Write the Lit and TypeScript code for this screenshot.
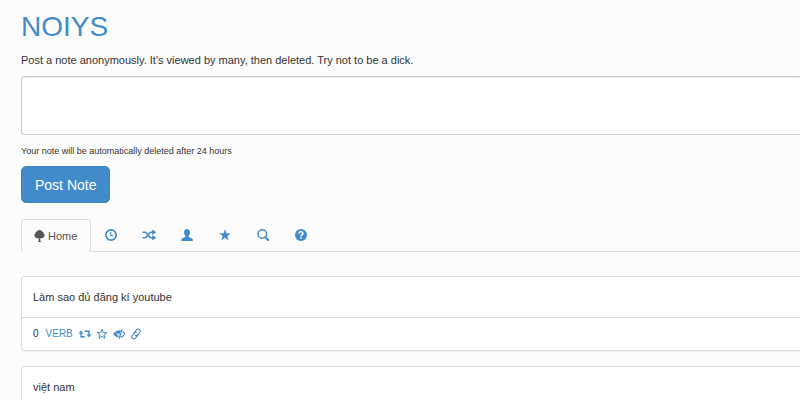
import { LitElement, html, css, svg } from "lit";
import { customElement } from "lit/decorators.js";

const icon = (body: unknown, cls = "icon") =>
  html`<svg class=${cls} viewBox="0 0 24 24" aria-hidden="true">${body}</svg>`;

const tree = svg`<path d="M11 0C8 0 6.500 1.500 6 3C3.500 3.500 2.500 5 3 7C.500 8.500 0 11.500 2 13.500C3.500 16 6.500 17 9.500 16.500V21L7.500 24H14.500L12.500 21V16.500C15.500 17 18.500 16 20 13.500C22 11.500 21.500 8.500 19 7C19.500 5 18.500 3.500 16 3C15.500 1.500 14 0 11 0Z"/>`;
const clock = svg`<circle cx="12" cy="12" r="10.200" fill="none" stroke="currentColor" stroke-width="3.400"/><path d="M11.500 6V13H16.500" fill="none" stroke="currentColor" stroke-width="2.200"/>`;
const random = svg`<path d="M-1 6.500H4C9 6.500 11 17.500 16 17.500H20M-1 17.500H4C9 17.500 11 6.500 16 6.500H20" fill="none" stroke="currentColor" stroke-width="3.200"/><path d="M18.500 1L26.500 6.500L18.500 12ZM18.500 12L26.500 17.500L18.500 23Z"/>`;
const user = svg`<path d="M12 0C8.500 0 6 2.500 6 6.500C6 9.500 7 12 8.500 13.500V16C5.500 17.500 1 18.500 .500 21V24H23.500V21C23 18.500 18.500 17.500 15.500 16V13.500C17 12 18 9.500 18 6.500C18 2.500 15.500 0 12 0Z"/>`;
const starPath = "M12 .5L14.900 8.700L23.600 8.900L16.700 14.100L19.200 22.500L12 17.500L4.800 22.500L7.300 14.100L.400 8.900L9.100 8.700Z";
const star = svg`<path d=${starPath}/>`;
const search = svg`<circle cx="10.500" cy="10" r="8.500" fill="none" stroke="currentColor" stroke-width="3"/><path d="M16.500 16L22.500 22" stroke="currentColor" stroke-width="4" stroke-linecap="round"/>`;
const help = svg`<circle cx="12" cy="12" r="12"/><path d="M8 9.500C8 4.500 16 4.500 16 9C16 12 12 11.500 12 15" fill="none" stroke="#fff" stroke-width="3"/><path d="M10.400 16.500H13.600V19.600H10.400Z" fill="#fff"/>`;
const retweet = svg`<path d="M2.500 9V18.800H11.500M11 5.200H21.500V15" fill="none" stroke="currentColor" stroke-width="3.600"/><path d="M-3.500 11L2.500 3.400L8.500 11ZM15.500 13L21.500 20.600L27.500 13Z"/>`;
const starEmpty = svg`<path d=${starPath} fill="none" stroke="currentColor" stroke-width="2.400"/>`;
const eyeClosed = svg`<path d="M16.500 3C9 2.500 2 6 -2 12C1 16.500 5 19.500 10 20.500L11.500 16.500C7 15 5 11 7 8C7.500 12 10.500 13.500 12.500 13Z"/><path d="M20.500 6C22.500 7.500 24.500 9.500 26 12C23.500 16 19.500 18.800 15 19.500" fill="none" stroke="currentColor" stroke-width="2.600"/><path d="M19.500 0L12 24" stroke="currentColor" stroke-width="2.600"/>`;
const link = svg`<g transform="rotate(-52 12 12)" fill="none" stroke="currentColor" stroke-width="2.600"><path d="M14 17H3.500A5 5 0 0 1 3.500 7H10A5 5 0 0 1 15 12"/><path d="M10 7H20.500A5 5 0 0 1 20.500 17H14A5 5 0 0 1 9 12"/></g>`;

@customElement("app-root")
export class AppRoot extends LitElement {
  static styles = css`
    :host {
      display: block;
      box-sizing: border-box;
      min-height: 100vh;
      padding: 10px 0 0 21px;
      overflow: hidden;
      background: #fcfcfc;
      color: #333;
      font: 11px/16px "Liberation Sans", Arial, sans-serif;
    }
    * { box-sizing: border-box; }
    a { color: #428bca; text-decoration: none; }
    h1 { margin: 0 0 8px; font-size: 28px; line-height: 34px; font-weight: 400; }
    p { margin: 0; }
    .note {
      display: block;
      width: 100%;
      height: 59px;
      margin: 8px 0;
      padding: 5px 10px;
      border: 1px solid #ccc;
      border-right: 0;
      border-radius: 4px 0 0 4px;
      background: #fff;
      font: inherit;
      resize: none;
      box-shadow: inset 0 1px 1px rgba(0, 0, 0, 0.075);
    }
    .hint { font-size: 9px; }
    .post {
      display: block;
      margin: 7px 0 16px;
      height: 37px;
      padding: 0 13px;
      border: 1px solid #3d86c6;
      border-radius: 5px;
      background: #428bca;
      color: #fff;
      font: 14px/20px "Liberation Sans", Arial, sans-serif;
    }
    .icon { width: 12px; height: 12px; fill: currentColor; overflow: visible; flex: none; }
    .small { width: 10px; height: 10px; fill: currentColor; overflow: visible; flex: none; }
    .tabs {
      display: flex;
      gap: 2px;
      height: 33px;
      margin-bottom: 24px;
      border-bottom: 1px solid #ddd;
    }
    .tab {
      display: flex;
      align-items: center;
      gap: 2px;
      height: 32px;
      padding: 0 12px;
    }
    .active {
      height: 33px;
      padding: 0 13px 0 12px;
      border: 1px solid #ddd;
      border-bottom: 0;
      border-radius: 4px 4px 0 0;
      background: #fcfcfc;
      color: #555;
    }
    .card {
      margin-bottom: 15px;
      border: 1px solid #ddd;
      border-right: 0;
      border-radius: 4px 0 0 4px;
      background: #fff;
      box-shadow: 0 1px 1px rgba(0, 0, 0, 0.05);
    }
    .body { padding: 12px 11px; }
    .actions {
      display: flex;
      align-items: center;
      gap: 7px;
      padding: 8px 11px;
      border-top: 1px solid #ddd;
      font-size: 10px;
    }
    .actions a { display: flex; }
  `;

  render() {
    const tabs: [string, unknown][] = [
      ["Recent", clock], ["Random", random], ["Profile", user],
      ["Starred", star], ["Search", search], ["Help", help],
    ];
    return html`
      <h1><a href="#">NOIYS</a></h1>
      <p>Post a note anonymously. It's viewed by many, then deleted. Try not to be a dick.</p>
      <textarea class="note" aria-label="Note"></textarea>
      <p class="hint">Your note will be automatically deleted after 24 hours</p>
      <button class="post">Post Note</button>
      <nav class="tabs">
        <a class="tab active" href="#">${icon(tree)}<span>Home</span></a>
        ${tabs.map(([name, body]) => html`<a class="tab" href="#" aria-label=${name}>${icon(body)}</a>`)}
      </nav>
      ${["Làm sao đủ đăng kí youtube", "việt nam"].map((text) => html`
        <article class="card">
          <div class="body">${text}</div>
          <div class="actions">
            <span>0</span>
            <a href="#">VERB</a>
            <a href="#" aria-label="Repost">${icon(retweet, "small")}</a>
            <a href="#" aria-label="Star">${icon(starEmpty, "small")}</a>
            <a href="#" aria-label="Hide">${icon(eyeClosed, "small")}</a>
            <a href="#" aria-label="Link">${icon(link, "small")}</a>
          </div>
        </article>`)}
    `;
  }
}
